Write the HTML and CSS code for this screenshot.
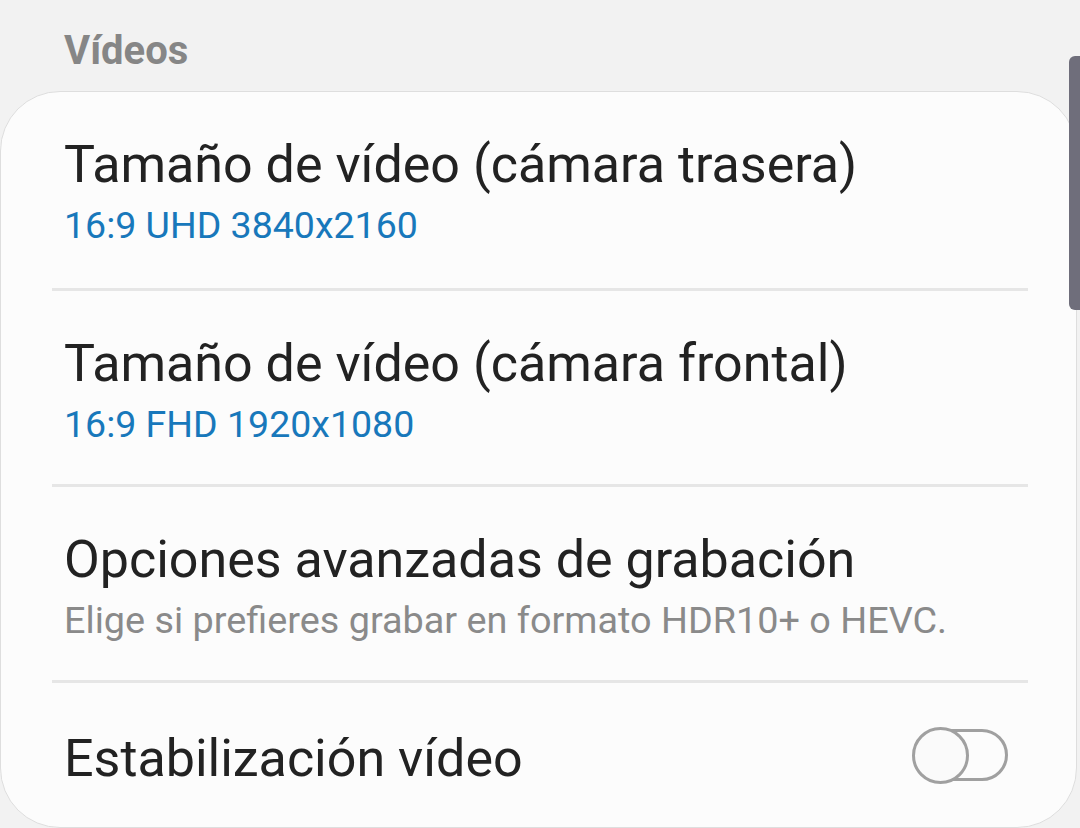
FILE: index.html
```html
<!DOCTYPE html>
<html lang="es">
<head>
  <meta charset="UTF-8">
  <meta name="viewport" content="width=device-width, initial-scale=1.0">
  <title>Vídeos</title>
  <link rel="stylesheet" href="styles.css">
</head>
<body>
  <div class="screen">
    <div class="page">
      <h2 class="section-title">Vídeos</h2>
      <div class="card">
        <div class="row">
          <div class="row-title">Tamaño de vídeo (cámara trasera)</div>
          <div class="row-value">16:9 UHD 3840x2160</div>
        </div>
        <div class="divider"></div>
        <div class="row">
          <div class="row-title">Tamaño de vídeo (cámara frontal)</div>
          <div class="row-value">16:9 FHD 1920x1080</div>
        </div>
        <div class="divider"></div>
        <div class="row">
          <div class="row-title">Opciones avanzadas de grabación</div>
          <div class="row-summary">Elige si prefieres grabar en formato HDR10+ o HEVC.</div>
        </div>
        <div class="divider"></div>
        <div class="row row-switch">
          <div class="row-title">Estabilización vídeo</div>
          <div class="switch">
            <span class="switch-track"></span>
            <span class="switch-thumb"></span>
          </div>
        </div>
      </div>
    </div>
    <div class="scrollbar"></div>
  </div>
</body>
</html>
```

FILE: styles.css
```css
html, body {
  margin: 0;
  padding: 0;
  height: 100%;
}

body {
  font-family: Roboto, "Noto Sans", sans-serif;
  background-color: #f2f2f2;
  overflow: hidden;
}

.screen {
  position: relative;
  height: 828px;
  overflow: hidden;
}

.section-title {
  margin: 0;
  padding: 27px 0 0 64px;
  height: 91px;
  box-sizing: border-box;
  font-size: 40px;
  line-height: 48px;
  font-weight: 700;
  color: #868686;
}

.card {
  background: #fcfcfc;
  border: 1px solid #dedede;
  border-radius: 60px;
  margin: 0 3px 0 0;
  height: 737px;
  box-sizing: border-box;
}

.row {
  padding: 43px 40px 0 63px;
  height: 196px;
  box-sizing: border-box;
}

.divider + .row {
  height: 193px;
}

.row-title {
  font-size: 52px;
  line-height: 60px;
  color: #222222;
}

.row-value,
.row-summary {
  margin-top: 6px;
  font-size: 37.5px;
  line-height: 48px;
}

.row-value {
  color: #1878bb;
}

.row-summary {
  font-size: 37.8px;
  color: #8a8a8a;
}

.divider {
  height: 3px;
  background: #e6e6e6;
  margin: 0 48px 0 51px;
}

.row-switch {
  display: flex;
  align-items: flex-start;
  justify-content: space-between;
  height: 145px;
  padding-top: 46px;
  padding-right: 68px;
}

.switch {
  position: relative;
  margin-top: -2px;
  width: 96px;
  height: 57px;
}

.switch-track {
  position: absolute;
  left: 2px;
  right: 0;
  top: 2px;
  bottom: 3px;
  border: 3px solid #a0a0a0;
  border-radius: 26px;
  box-sizing: border-box;
}

.switch-thumb {
  position: absolute;
  left: 0;
  top: 0;
  width: 57px;
  height: 57px;
  border: 3px solid #a0a0a0;
  border-radius: 50%;
  background: #fafafa;
  box-sizing: border-box;
}

.scrollbar {
  position: absolute;
  right: 0;
  top: 56px;
  width: 11px;
  height: 254px;
  background: #6f6e7b;
  border-radius: 6px 0 0 6px;
}
```
